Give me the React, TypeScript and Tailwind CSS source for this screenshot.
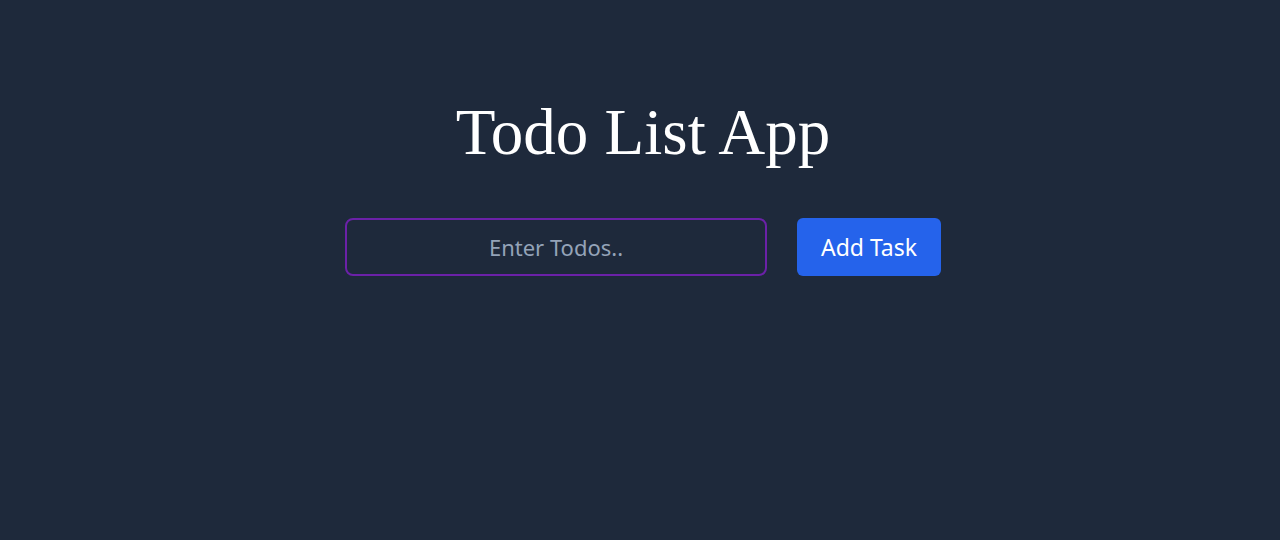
export default function App() {
  return (
    <div className="min-h-[540px] w-full bg-[#1e293b] flex flex-col items-center pl-[6px] pt-[92px]">
      {/* Title */}
      <h1 className="text-white text-[65px] leading-[80px] font-['Liberation_Serif',serif]">
        Todo List App
      </h1>

      {/* Input row */}
      <div className="flex items-center gap-[30px] mt-[46px] font-['Noto_Sans',sans-serif]">
        <input
          type="text"
          placeholder="Enter Todos.."
          className="w-[422px] h-[58px] rounded-lg border-2 border-[#6b21a8] bg-transparent text-center text-[22px] text-white placeholder:text-[#94a3b8] outline-none"
        />
        <button className="w-[144px] h-[58px] rounded-md bg-[#2563eb] text-white text-[23px]">
          Add Task
        </button>
      </div>
    </div>
  );
}
